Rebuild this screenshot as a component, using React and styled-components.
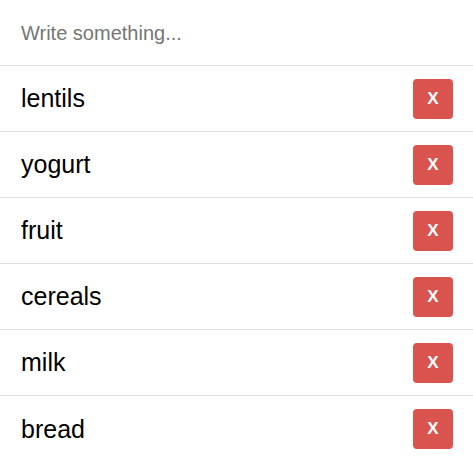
import styled, { createGlobalStyle } from "styled-components";

const GlobalStyle = createGlobalStyle`
  body {
    margin: 0;
    background: #fff;
    font-family: "Liberation Sans", Arial, sans-serif;
  }
`;

const List = styled.div`
  display: flex;
  flex-direction: column;
  width: 100%;
`;

const Input = styled.input`
  box-sizing: border-box;
  width: 100%;
  height: 66px;
  border: none;
  border-bottom: 1px solid #ddd;
  padding: 2px 21px 0;
  font-family: "Liberation Sans", Arial, sans-serif;
  font-size: 20px;
  color: #333;
  outline: none;
  &::placeholder {
    color: #757575;
  }
`;

const Row = styled.div`
  box-sizing: border-box;
  display: flex;
  align-items: center;
  justify-content: space-between;
  height: 66px;
  padding: 0 20px 0 21px;
  border-bottom: ${(p) => (p.last ? "none" : "1px solid #ddd")};
`;

const Label = styled.span`
  font-size: 25px;
  color: #000;
`;

const DeleteButton = styled.button`
  width: 40px;
  height: 40px;
  border: none;
  border-radius: 4px;
  background: #d9534f;
  color: #fff;
  font-family: "Liberation Sans", Arial, sans-serif;
  font-size: 17px;
  font-weight: bold;
  padding: 0;
  cursor: pointer;
`;

const items = ["lentils", "yogurt", "fruit", "cereals", "milk", "bread"];

export default function App() {
  return (
    <>
      <GlobalStyle />
      <List>
        <Input placeholder="Write something..." />
        {items.map((item, i) => (
          <Row key={item} last={i === items.length - 1}>
            <Label>{item}</Label>
            <DeleteButton>X</DeleteButton>
          </Row>
        ))}
      </List>
    </>
  );
}
